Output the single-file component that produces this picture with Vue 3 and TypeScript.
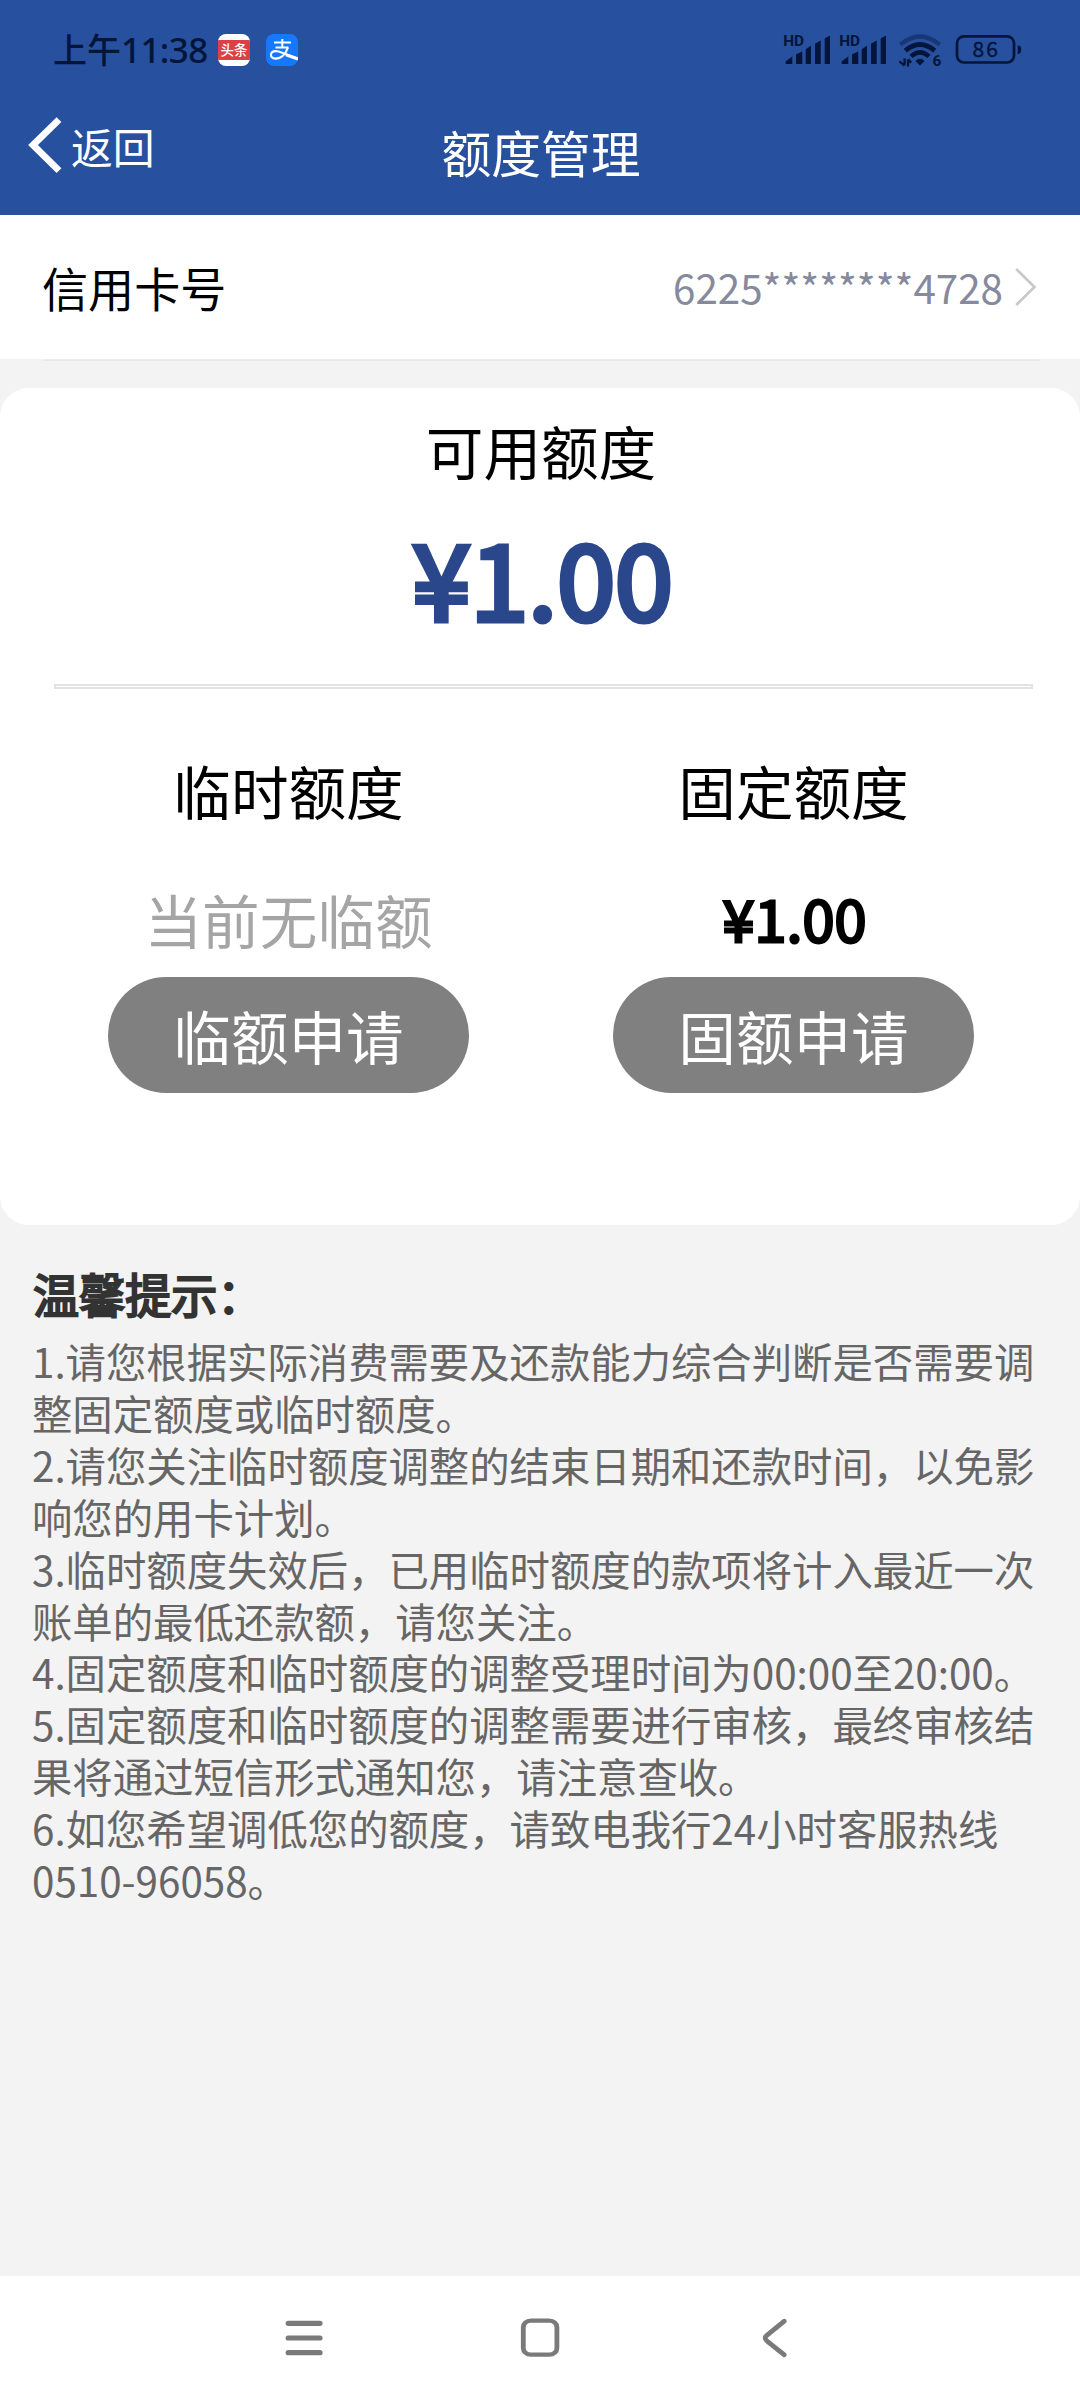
<script setup lang="ts">
interface Quota {
  label: string
  value: string
  empty: boolean
  action: string
}

const cardNumber = '6225********4728'
const available = '¥1.00'

const quotas: Quota[] = [
  { label: '临时额度', value: '当前无临额', empty: true, action: '临额申请' },
  { label: '固定额度', value: '¥1.00', empty: false, action: '固额申请' },
]

const tips: string[][] = [
  ['1.请您根据实际消费需要及还款能力综合判断是否需要调', '整固定额度或临时额度。'],
  ['2.请您关注临时额度调整的结束日期和还款时间，以免影', '响您的用卡计划。'],
  ['3.临时额度失效后，已用临时额度的款项将计入最近一次', '账单的最低还款额，请您关注。'],
  ['4.固定额度和临时额度的调整受理时间为00:00至20:00。'],
  ['5.固定额度和临时额度的调整需要进行审核，最终审核结', '果将通过短信形式通知您，请注意查收。'],
  ['6.如您希望调低您的额度，请致电我行24小时客服热线', '0510-96058。'],
]

const signals = [0, 56]
</script>

<template>
  <div class="screen">
    <header class="header">
      <div class="status">
        <span class="clock">上午<span class="digits">11:38</span></span>
        <span class="news"><span class="news-band">头条</span></span>
        <svg class="pay" width="32" height="32" viewBox="0 0 32 32">
          <rect width="32" height="32" rx="8" fill="#1677ff" />
          <g fill="none" stroke="#fff" stroke-linecap="butt">
            <path d="M8 8.6H25M16.3 5V13.4M9.5 13.4H22.4" stroke-width="2" />
            <path d="M22 13.4C20.2 18.6 16 24.6 9.6 24.6C6.2 24.6 4.6 22.6 5 20.4C5.4 18.2 7.8 16.8 11 17.2C16 17.8 23 22 32 24.6" stroke-width="2.1" />
            <path d="M20 20.8L32 24.9" stroke-width="3.2" />
          </g>
        </svg>
        <svg class="indicators" width="250" height="40" viewBox="780 30 250 40">
          <g v-for="dx in signals" :key="dx" :transform="`translate(${dx} 0)`" fill="#04153b">
            <text x="783.2" y="45.8" class="hd">HD</text>
            <path d="M785.7 64V61.2L792.3 56.6V64ZM796 64V54.6L802.3 51.2V64ZM805.7 64V49.5L811 45.6V64ZM815 64V43.8L820.7 40.4V64ZM824.7 64V38.6L830 35.4V64Z" />
          </g>
          <g fill="none" stroke="#04153b">
            <path d="M900.3 44.6Q920 28.4 939.7 44.6" stroke-width="4.2" opacity=".42" />
            <path d="M905.3 50.6Q920 38.2 934.7 50.6" stroke-width="4.8" />
            <path d="M911 56.4Q920 48.4 929 56.4" stroke-width="4.6" />
            <path d="M904.6 58.4V65M899.4 61.4L904.6 65.6M908 66.4V59.4M908 59.4L911.2 62.6" stroke-width="2.3" />
            <rect x="957" y="36.3" width="57" height="26.2" rx="7" stroke-width="2.7" />
          </g>
          <path d="M915.4 61Q920 56.6 924.6 61L920 65.6Z" fill="#04153b" />
          <path d="M1017.7 45.6Q1021.2 45.2 1021.2 49.6Q1021.2 54.2 1017.7 54Z" fill="#04153b" />
          <text x="932.6" y="65.8" class="gen">6</text>
          <text x="972.6" y="57.4" class="level">86</text>
        </svg>
      </div>
      <nav class="navbar">
        <a class="back">
          <svg width="36" height="58" viewBox="0 0 36 58">
            <path d="M31 3.6L5 29L31 54.6" fill="none" stroke="#fff" stroke-width="6.8" />
          </svg>
          <span class="back-text">返回</span>
        </a>
        <h1 class="title">额度管理</h1>
        <span class="side"></span>
      </nav>
    </header>

    <section class="card-row">
      <span class="card-label">信用卡号</span>
      <span class="card-number">{{ cardNumber }}</span>
      <svg class="more" width="22" height="40" viewBox="0 0 22 40">
        <path d="M1.2 2L19.5 20L1.2 38" fill="none" stroke="#c8c8cc" stroke-width="2.6" />
      </svg>
    </section>
    <div class="row-line"></div>

    <section class="panel">
      <h2 class="panel-title">可用额度</h2>
      <div class="amount">{{ available }}</div>
      <div class="rule"></div>
      <div class="quotas">
        <div v-for="q in quotas" :key="q.label" class="quota">
          <div class="quota-label">{{ q.label }}</div>
          <div class="quota-value" :class="q.empty ? 'is-empty' : 'is-amount'">{{ q.value }}</div>
          <button class="apply" type="button">{{ q.action }}</button>
        </div>
      </div>
    </section>

    <section class="tips">
      <h3 class="tips-title">温馨提示：</h3>
      <p v-for="(tip, i) in tips" :key="i" class="tip">
        <span v-for="line in tip" :key="line" class="tip-line">{{ line }}</span>
      </p>
    </section>

    <footer class="system-nav">
      <svg width="60" height="60" viewBox="0 0 60 60">
        <path d="M14.2 15.3H46M14.2 30H46M14.2 44.7H46" stroke="#7a7a7a" stroke-width="5.2" stroke-linecap="round" />
      </svg>
      <svg width="60" height="60" viewBox="0 0 60 60">
        <rect x="13.3" y="12.7" width="33.6" height="39" rx="7.5" fill="none" stroke="#7a7a7a" stroke-width="4.8" transform="translate(0 1.6) scale(1 .872)" />
      </svg>
      <svg width="60" height="60" viewBox="0 0 60 60">
        <path d="M38.3 13.2L20.8 27.4Q17.6 30 20.8 32.8L38.3 46.8" fill="none" stroke="#7a7a7a" stroke-width="4.8" stroke-linecap="round" stroke-linejoin="round" />
      </svg>
    </footer>
  </div>
</template>

<style>
body {
  margin: 0;
  background: #f3f3f3;
}
</style>

<style scoped>
.screen {
  display: flex;
  flex-direction: column;
  width: 1080px;
  height: 2400px;
  overflow: hidden;
  background: #f3f3f3;
  color: #000;
  font-family: "Noto Sans CJK SC", sans-serif;
}

h1,
h2,
h3,
p {
  margin: 0;
  font-weight: 400;
}

.header {
  flex: none;
  height: 215px;
  background: #27509e;
}

.status {
  display: flex;
  align-items: center;
  height: 100px;
  padding-left: 53px;
}

.clock {
  display: flex;
  align-items: baseline;
  width: 165px;
  margin-top: -1px;
  color: #04153b;
  font-size: 34px;
  font-weight: 500;
  line-height: 40px;
  white-space: nowrap;
}

.digits {
  font-family: "Noto Sans", sans-serif;
  font-size: 35px;
  letter-spacing: -0.6px;
}

.news {
  display: flex;
  align-items: center;
  width: 32px;
  height: 32px;
  border-radius: 8px;
  background: #fff;
  overflow: hidden;
}

.news-band {
  width: 32px;
  height: 20px;
  background: #dc3f48;
  color: #fff;
  font-size: 13.5px;
  font-weight: 500;
  line-height: 19px;
  text-align: center;
}

.pay {
  margin-left: 16px;
}

.indicators {
  margin-left: 482px;
}

.hd {
  font: 700 15.4px Roboto, sans-serif;
}

.gen {
  font: 700 15.4px Roboto, sans-serif;
  fill: #04153b;
}

.level {
  font: 400 21px "Noto Sans CJK SC", sans-serif;
  letter-spacing: 2px;
  fill: #04153b;
  stroke: #04153b;
  stroke-width: 0.4px;
}

.navbar {
  display: flex;
  align-items: flex-start;
  height: 115px;
  color: #fff;
}

.back {
  display: flex;
  align-items: center;
  width: 300px;
  height: 58px;
  padding: 16px 0 0 28px;
}

.back-text {
  margin: 1px 0 0 7px;
  font-size: 41.8px;
  line-height: 58px;
}

.title {
  flex: 1;
  padding-top: 16px;
  font-size: 49.8px;
  line-height: 70px;
  text-align: center;
}

.side {
  width: 326px;
}

.card-row {
  display: flex;
  flex: none;
  align-items: center;
  height: 144px;
  padding: 0 43px 0 42px;
  background: #fff;
}

.card-label {
  flex: 1;
  font-size: 46.08px;
}

.card-number {
  margin: -1px 12px 0 0;
  color: #858a9c;
  font-size: 40.36px;
}

.more {
  margin-top: -1px;
}

.row-line {
  flex: none;
  height: 2px;
  margin: 0 40px 27px 43px;
  background: linear-gradient(#ececec, #e9e9e9);
}

.panel {
  flex: none;
  height: 837px;
  border-radius: 28.8px;
  background: #fff;
}

.panel-title {
  padding: 20px 0 0 2px;
  font-size: 57.6px;
  line-height: 84px;
  text-align: center;
}

.amount {
  height: 150px;
  margin-top: 8px;
  padding-left: 5px;
  color: #2b478b;
  font-size: 105px;
  line-height: 150px;
  letter-spacing: -0.4px;
  text-align: center;
  -webkit-text-stroke: 5.2px #2b478b;
}

.rule {
  height: 1px;
  margin: 34px 47px 0 54px;
  border: 2px solid #e2e2e2;
}

.quotas {
  display: flex;
  width: 1010px;
  margin: 59px 0 0 36px;
}

.quota {
  display: flex;
  flex: 1;
  flex-direction: column;
  align-items: center;
}

.quota-label,
.quota-value {
  font-size: 57.6px;
  line-height: 84px;
}

.quota-value {
  margin: 45px 0 16px;
}

.is-empty {
  color: #a5a5a5;
}

.is-amount {
  margin: 43px 0 18px;
  padding-left: 2px;
  -webkit-text-stroke: 2.8px #000;
}

.apply {
  width: 361px;
  height: 116px;
  padding: 0 0 1px;
  border: 0;
  border-radius: 58px;
  background: #808080;
  color: #fff;
  font: inherit;
  font-size: 57.6px;
  line-height: 84px;
}

.tips {
  flex: 1;
  padding: 34px 0 0 32px;
}

.tips-title {
  margin: 0 0 8px 1px;
  color: #333;
  font-size: 46.08px;
  line-height: 68px;
  -webkit-text-stroke: 2.2px #333;
}

.tip {
  color: #666;
  font-size: 40.36px;
  line-height: 51.9px;
}

.tip-line {
  display: block;
  white-space: nowrap;
}

.system-nav {
  display: flex;
  flex: none;
  gap: 176px;
  height: 124px;
  padding-left: 274px;
  align-items: center;
  background: #fff;
}
</style>
